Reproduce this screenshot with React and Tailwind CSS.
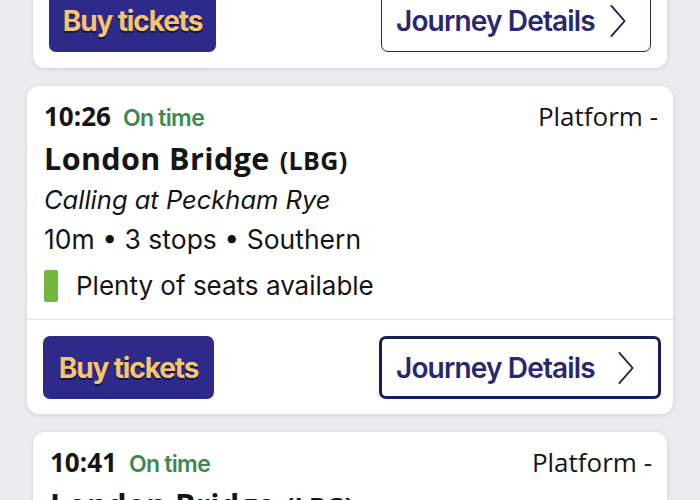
import React from "react";

const heading = { fontFamily: '"Open Sans", "Noto Sans", sans-serif' };
const body = { fontFamily: 'Inter, "Noto Sans", sans-serif' };

const Chevron = ({ className = "" }) => (
  <svg viewBox="0 0 20 36" className={className} fill="none">
    <polyline
      points="3,2 17,18 3,34"
      stroke="currentColor"
      strokeWidth="2"
      strokeLinecap="round"
      strokeLinejoin="round"
    />
  </svg>
);

const Actions = ({ strong }) => (
  <div className="flex items-center justify-between">
    <button
      className={`h-[63px] rounded-[7px] bg-[#2e2a8a] text-[28px] font-bold tracking-[-0.04em] text-[#f6c56f] [text-shadow:0_2px_0_#15124a] ${
        strong ? "w-[171px]" : "w-[167px]"
      }`}
      style={body}
    >
      Buy tickets
    </button>
    <button
      className={`flex h-[63px] items-center rounded-[7px] bg-white pl-[14px] text-[28px] font-semibold tracking-[-0.03em] text-[#2a276e] ${
        strong
          ? "w-[282px] border-[3px] border-[#1b1a5a]"
          : "w-[270px] border-[1.5px] border-[#2a2a3a]"
      }`}
      style={body}
    >
      <span>Journey Details</span>
      <Chevron className="ml-auto mr-[22px] h-[34px] w-[20px] text-[#1f1d55]" />
    </button>
  </div>
);

const Info = ({ time }) => (
  <div className="pt-[14px] pb-[17px] pl-[17px] pr-[15px] text-[#151515]">
    <div className="flex h-[32px] items-baseline justify-between">
      <div className="flex items-baseline gap-[12px]">
        <span className="text-[26px] font-bold leading-[32px]" style={heading}>
          {time}
        </span>
        <span
          className="text-[23px] font-semibold leading-[32px] tracking-[-0.03em] text-[#3b8a52]"
          style={body}
        >
          On time
        </span>
      </div>
      <span className="text-[26px] leading-[32px]" style={heading}>
        Platform -
      </span>
    </div>
    <div className="mt-[8px] flex h-[36px] items-baseline gap-[10px] leading-[36px] tracking-[0.025em]" style={heading}>
      <span className="text-[30.5px] font-bold">London Bridge</span>
      <span className="text-[25px] font-bold">(LBG)</span>
    </div>
    <div className="mt-[8px] text-[25.5px] italic leading-[32px]" style={body}>
      Calling at Peckham Rye
    </div>
    <div className="mt-[7px] text-[26.5px] leading-[32px]" style={body}>
      10m • 3 stops • Southern
    </div>
    <div className="mt-[15px] flex h-[32px] items-center gap-[18px]">
      <span className="h-[32px] w-[14px] rounded-[2px] bg-[#72b83f]" />
      <span className="text-[26px] leading-[32px]" style={body}>
        Plenty of seats available
      </span>
    </div>
  </div>
);

export default function App() {
  return (
    <div className="h-[500px] w-[700px] overflow-hidden bg-[#ececee]">
      <div className="mx-[33px] -mt-[28px] rounded-[12px] bg-white px-[16px] pt-[17px] pb-[16px] shadow-[0_1px_5px_rgba(0,0,0,0.12)]">
        <Actions />
      </div>

      <div className="mx-[27px] mt-[18px] rounded-[12px] bg-white shadow-[0_1px_5px_rgba(0,0,0,0.12)]">
        <Info time="10:26" />
        <div className="border-t border-[#e4e4e6] pl-[16px] pr-[12px] pt-[16px] pb-[15px]">
          <Actions strong />
        </div>
      </div>

      <div className="mx-[33px] mt-[18px] rounded-[12px] bg-white shadow-[0_1px_5px_rgba(0,0,0,0.12)]">
        <Info time="10:41" />
      </div>
    </div>
  );
}
